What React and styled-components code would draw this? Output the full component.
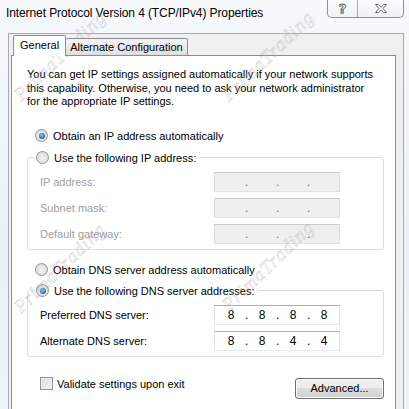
import React from 'react';
import styled, { createGlobalStyle } from 'styled-components';

const GlobalStyle = createGlobalStyle`
  html, body { margin: 0; padding: 0; }
  body {
    width: 409px;
    height: 409px;
    overflow: hidden;
    background: #eef3f8;
    font-family: "Liberation Sans", Arial, sans-serif;
    font-size: 11px;
    color: #000;
  }
`;

const Window = styled.div`
  position: relative;
  width: 409px;
  height: 409px;
  display: flex;
  flex-direction: column;
  background: linear-gradient(180deg, #f7f9fc 0%, #e9f0f7 60%, #eef3f8 100%);
  overflow: hidden;
`;

const TitleBar = styled.div`
  flex: none;
  height: 33px;
  display: flex;
  justify-content: space-between;
  align-items: flex-start;
  padding: 0 5px 0 6px;
`;

const Title = styled.div`
  font-size: 12px;
  line-height: 27px;
  letter-spacing: -0.1px;
`;

const CaptionGroup = styled.div`
  display: flex;
  height: 17px;
  border: 1px solid #8b919a;
  border-top: none;
  border-radius: 0 0 5px 5px;
  background: linear-gradient(180deg, #fbfcfd 0%, #eef2f6 100%);
  overflow: hidden;
`;

const CaptionButton = styled.div`
  width: ${p => p.$w}px;
  display: flex;
  align-items: center;
  justify-content: center;
  & + & { border-left: 1px solid #a4aab2; }
`;

const HelpGlyph = styled.span`
  font-family: "DejaVu Sans", sans-serif;
  font-weight: bold;
  font-size: 13px;
  line-height: 1;
  color: #fff;
  -webkit-text-stroke: 0.8px #555;
`;

const Client = styled.div`
  flex: 1;
  margin-left: 8px;
  width: 396px;
  box-sizing: border-box;
  border: 1px solid #a3acb8;
  border-bottom: none;
  background: #f0f0f0;
  display: flex;
  flex-direction: column;
`;

const TabStrip = styled.div`
  display: flex;
  align-items: flex-end;
  height: 20px;
  margin: 2px 0 -1px 4px;
  position: relative;
  z-index: 1;
`;

const Tab = styled.div`
  box-sizing: border-box;
  height: ${p => (p.$active ? 21 : 18)}px;
  padding: 0 ${p => (p.$active ? 6 : 4)}px;
  display: flex;
  align-items: center;
  border: 1px solid #898c95;
  border-bottom: ${p => (p.$active ? 'none' : '1px solid #898c95')};
  border-left: ${p => (p.$active ? '1px solid #898c95' : 'none')};
  border-radius: 2px 2px 0 0;
  background: ${p => (p.$active ? '#fff' : 'linear-gradient(180deg, #f3f3f3 0%, #ebebeb 50%, #dedede 100%)')};
  font-size: 11px;
  padding-bottom: ${p => (p.$active ? 2 : 0)}px;
`;

const Panel = styled.div`
  flex: 1;
  margin-left: 2px;
  width: 385px;
  box-sizing: border-box;
  background: #fff;
  border: 1px solid #898c95;
  border-bottom: none;
  padding: 12px 11px 0 15px;
  display: flex;
  flex-direction: column;
`;

const Intro = styled.p`
  margin: 0;
  line-height: 13.5px;
  font-size: 11px;
`;

const RadioRow = styled.label`
  display: flex;
  align-items: center;
  gap: 5px;
  height: 16px;
  padding-left: 8px;
  margin-top: ${p => p.$mt || 0}px;
  white-space: nowrap;
`;

const RadioDot = styled.span`
  flex: none;
  width: 11px;
  height: 11px;
  border-radius: 50%;
  border: 1px solid #8f9398;
  background: radial-gradient(circle at 50% 55%, #f4f4f4 0%, #e2e2e2 55%, #cfd1d3 100%);
  display: flex;
  align-items: center;
  justify-content: center;
  &::after {
    content: '';
    display: ${p => (p.$checked ? 'block' : 'none')};
    width: 6px;
    height: 6px;
    border-radius: 50%;
    background: radial-gradient(circle at 45% 40%, #8ed2f6 0%, #2b77b8 55%, #16406f 100%);
  }
`;

const Group = styled.fieldset`
  margin: ${p => p.$mt || 0}px 0 0;
  padding: 0 0 5px 12px;
  border: 1px solid #d5dfe5;
  border-radius: 3px;
  min-width: 0;
`;

const GroupLegend = styled.legend`
  margin-left: -6px;
  padding: 0 3px 0 2px;
  height: 16px;
  display: flex;
  align-items: center;
  gap: 5px;
  white-space: nowrap;
`;

const FieldGrid = styled.div`
  display: grid;
  grid-template-columns: 174px 126px;
  row-gap: 6px;
  margin-top: 6px;
`;

const FieldLabel = styled.span`
  display: flex;
  align-items: center;
  height: 20px;
  color: ${p => (p.$disabled ? '#a0a0a0' : '#000')};
`;

const IpBox = styled.div`
  box-sizing: border-box;
  height: 20px;
  display: flex;
  padding-left: 2px;
  border: 1px solid;
  border-color: ${p => (p.$disabled ? '#c9cbce #dadcdf #e0e2e4 #dadcdf' : '#abadb3 #dbdfe6 #e3e9ef #e2e3ea')};
  background: ${p => (p.$disabled ? '#efefef' : '#fff')};
  color: ${p => (p.$disabled ? '#6d6d6d' : '#000')};
  font-size: 12px;
  line-height: 18px;
`;

const Octet = styled.span`
  width: 28px;
  text-align: center;
`;

const Dot = styled.span`
  width: 3px;
  text-align: center;
`;

const Footer = styled.div`
  display: flex;
  justify-content: space-between;
  align-items: flex-start;
  margin-top: 21px;
  padding-left: 13px;
`;

const CheckRow = styled.label`
  display: flex;
  align-items: center;
  gap: 4px;
  height: 12px;
`;

const CheckBox = styled.span`
  width: 11px;
  height: 11px;
  border: 1px solid #8f9398;
  background: linear-gradient(135deg, #dcdcdc 0%, #f4f4f4 100%);
  box-shadow: inset 0 0 0 1px #f2f2f2;
`;

const Button = styled.button`
  box-sizing: border-box;
  width: 89px;
  height: 21px;
  border: 1px solid #707070;
  border-radius: 3px;
  background: linear-gradient(180deg, #f2f2f2 0%, #ebebeb 49%, #dddddd 50%, #cfcfcf 100%);
  box-shadow: inset 0 0 0 1px #fcfcfc;
  font-family: inherit;
  font-size: 11px;
  color: #000;
  padding: 0;
`;

const Watermark = styled.span`
  position: absolute;
  left: ${p => p.$x}px;
  top: ${p => p.$y}px;
  transform: translate(-50%, -50%) rotate(-44deg);
  font-family: "Liberation Serif", serif;
  font-style: italic;
  font-size: 19px;
  letter-spacing: 1px;
  white-space: nowrap;
  color: rgba(255, 255, 255, 0.1);
  -webkit-text-stroke: 0.6px rgba(150, 150, 150, 0.4);
  pointer-events: none;
`;

const CloseIcon = () => (
  <svg width="14" height="11" viewBox="0 0 14 11">
    <path
      d="M1.5 1.5h3l2.5 2.6 2.5-2.6h3L9 5.5l3.5 4h-3L7 6.9 4.5 9.5h-3L5 5.5z"
      fill="#fff"
      stroke="#5a5a5a"
      strokeWidth="0.9"
      strokeLinejoin="round"
    />
  </svg>
);

const Ip = ({ value, disabled }) => {
  const parts = value ? value.split('.') : ['', '', '', ''];
  return (
    <IpBox $disabled={disabled}>
      {parts.map((p, i) => (
        <React.Fragment key={i}>
          {i > 0 && <Dot>.</Dot>}
          <Octet>{p}</Octet>
        </React.Fragment>
      ))}
    </IpBox>
  );
};

export default function App() {
  return (
    <Window>
      <GlobalStyle />
      <TitleBar>
        <Title>Internet Protocol Version 4 (TCP/IPv4) Properties</Title>
        <CaptionGroup>
          <CaptionButton $w={29}>
            <HelpGlyph>?</HelpGlyph>
          </CaptionButton>
          <CaptionButton $w={45}>
            <CloseIcon />
          </CaptionButton>
        </CaptionGroup>
      </TitleBar>
      <Client>
        <TabStrip>
          <Tab $active>General</Tab>
          <Tab>Alternate Configuration</Tab>
        </TabStrip>
        <Panel>
          <Intro>
            You can get IP settings assigned automatically if your network supports
            <br />
            this capability. Otherwise, you need to ask your network administrator
            <br />
            for the appropriate IP settings.
          </Intro>

          <RadioRow $mt={19}>
            <RadioDot $checked />
            Obtain an IP address automatically
          </RadioRow>

          <Group $mt={6}>
            <GroupLegend>
              <RadioDot />
              Use the following IP address:
            </GroupLegend>
            <FieldGrid>
              <FieldLabel $disabled>IP address:</FieldLabel>
              <Ip disabled />
              <FieldLabel $disabled>Subnet mask:</FieldLabel>
              <Ip disabled />
              <FieldLabel $disabled>Default gateway:</FieldLabel>
              <Ip disabled />
            </FieldGrid>
          </Group>

          <RadioRow $mt={12}>
            <RadioDot />
            Obtain DNS server address automatically
          </RadioRow>

          <Group $mt={5}>
            <GroupLegend>
              <RadioDot $checked />
              Use the following DNS server addresses:
            </GroupLegend>
            <FieldGrid>
              <FieldLabel>Preferred DNS server:</FieldLabel>
              <Ip value="8.8.8.8" />
              <FieldLabel>Alternate DNS server:</FieldLabel>
              <Ip value="8.8.4.4" />
            </FieldGrid>
          </Group>

          <Footer>
            <CheckRow>
              <CheckBox />
              Validate settings upon exit
            </CheckRow>
            <Button>Advanced...</Button>
          </Footer>
        </Panel>
      </Client>
      <Watermark $x={60} $y={56}>PrimaTrading</Watermark>
      <Watermark $x={268} $y={56}>PrimaTrading</Watermark>
      <Watermark $x={60} $y={268}>PrimaTrading</Watermark>
      <Watermark $x={268} $y={266}>PrimaTrading</Watermark>
    </Window>
  );
}
